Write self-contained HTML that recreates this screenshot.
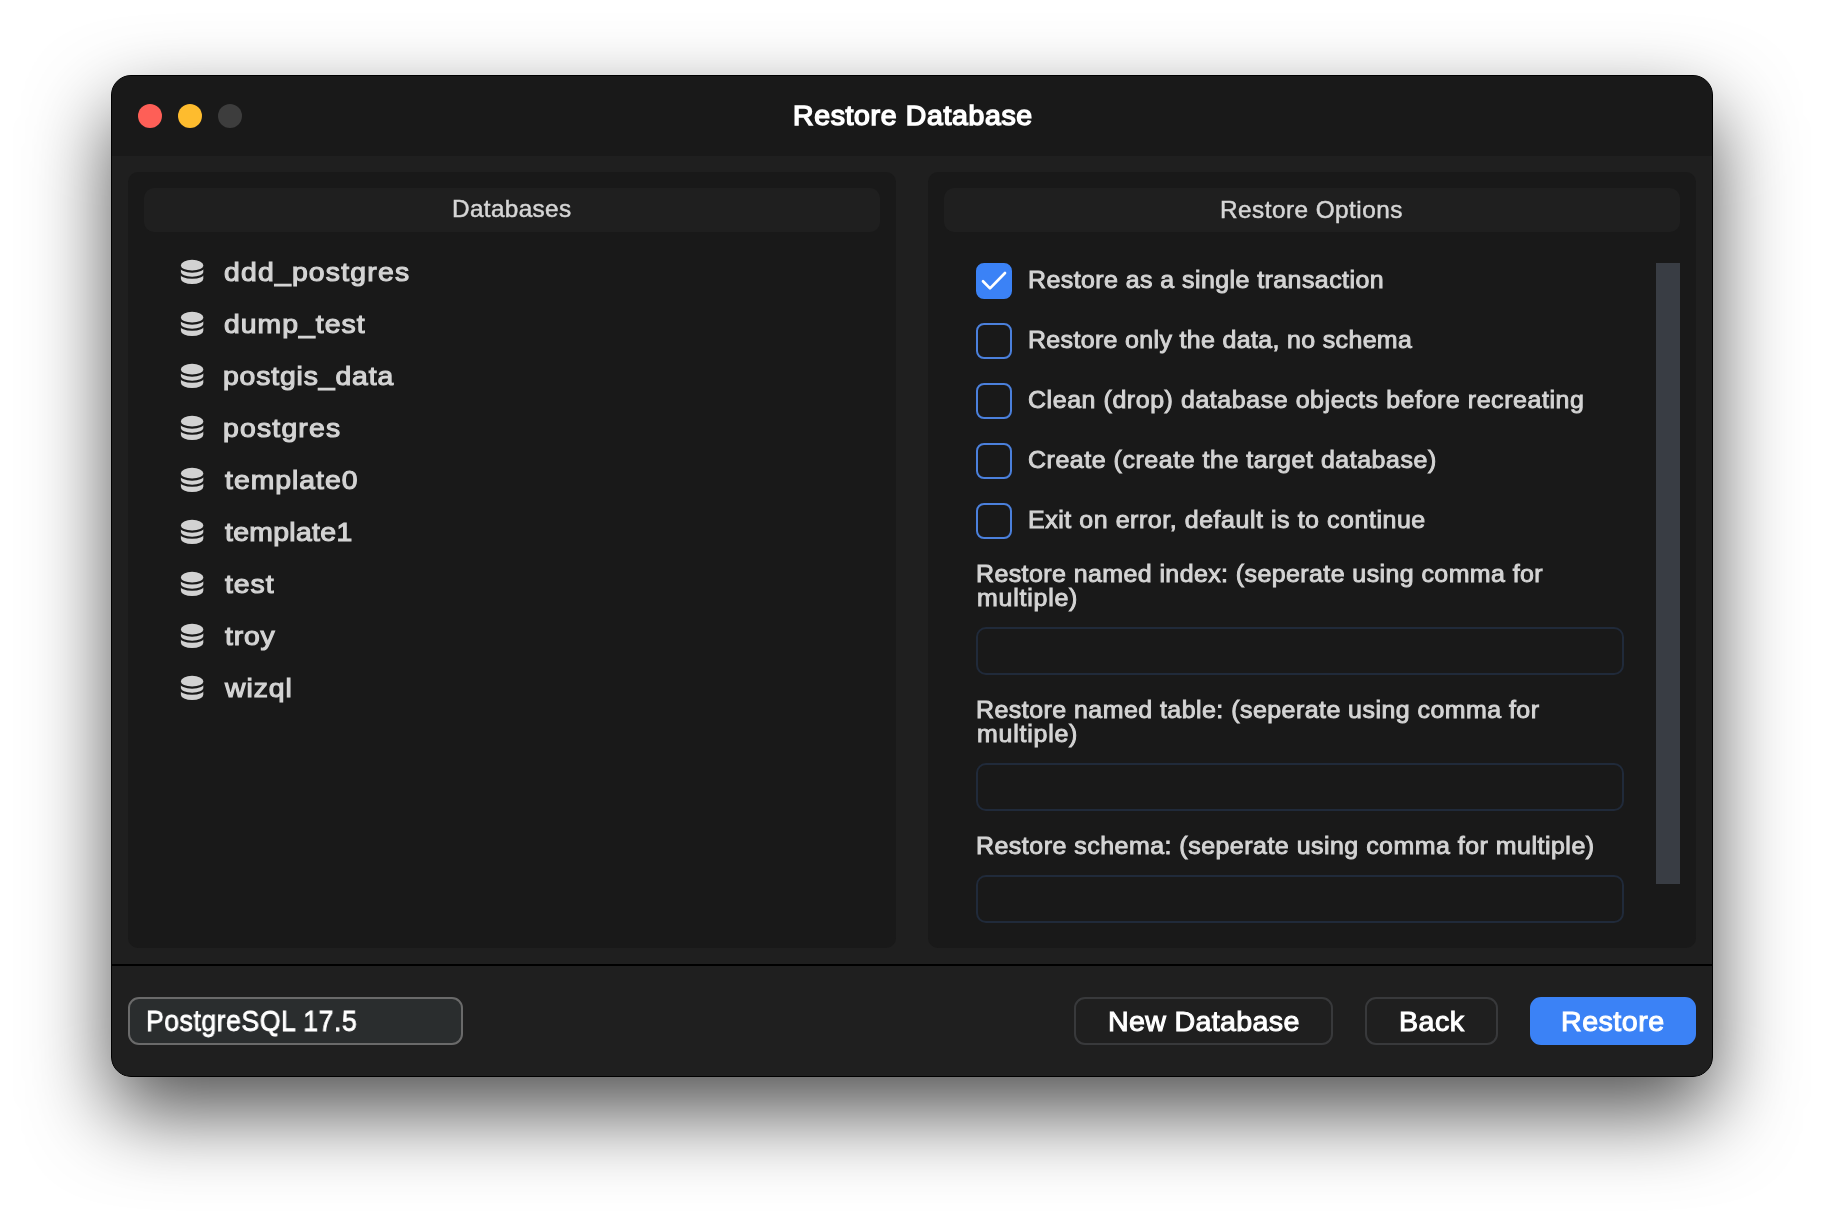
<!DOCTYPE html>
<html lang="en">
<head>
<meta charset="utf-8">
<title>Restore Database</title>
<style>
*{box-sizing:border-box;margin:0;padding:0}
html,body{width:1824px;height:1224px;background:#fff;overflow:hidden}
body{position:relative;font-family:"Liberation Sans",sans-serif;color:#d4d4d4}
.shadow{position:absolute;left:111px;top:75px;width:1602px;height:1002px;border-radius:20px;
  box-shadow:0 36px 82px rgba(0,0,0,.68)}
.win{transform:translateZ(0);position:absolute;left:111px;top:75px;width:1602px;height:1002px;border-radius:20px;background:#1f1f1f;overflow:hidden;border:1px solid #000}
.win *{position:absolute}
.t{white-space:nowrap;line-height:1;will-change:transform;transform-origin:0 0}
.titlebar{left:0;top:0;width:1600px;height:80px;background:#191919}
.dot{width:24px;height:24px;border-radius:50%;top:28px}
.title{color:#fff;-webkit-text-stroke:1.45px #fff}
.panel{top:96px;width:768px;height:776px;background:#191919;border-radius:10px}
.phead{top:112px;width:736px;height:44px;background:#1f1f1f;border-radius:10px}
.ph{color:#d6d6d6;-webkit-text-stroke:.5px #d6d6d6}
.db{color:#d4d4d4;-webkit-text-stroke:1.1px #d4d4d4}
.ico{left:68px;width:24px;height:26px}
.cb{left:864px;width:36px;height:36px;border:2px solid #4b80dc;border-radius:8px}
.cb.on{background:#3b82f6;border-color:#3b82f6}
.cl,.lab{color:#d4d4d4;-webkit-text-stroke:.9px #d4d4d4}
.inp{left:864px;width:648px;height:48px;border:2px solid #202a3a;border-radius:10px;background:#191919}
.sb{left:1544px;top:187px;width:24px;height:621px;background:#393d44}
.divider{left:0;top:888px;width:1600px;height:2px;background:#000}
.pgbox{left:16px;top:921px;width:335px;height:48px;border:2px solid #6a6a6a;border-radius:11px;background:#2a2d2e}
.pg{color:#fff;-webkit-text-stroke:.8px #fff}
.btn{top:921px;height:48px;border:2px solid #38393b;border-radius:11px;background:#1f1f1f}
.btn.primary{background:#3b82f6;border-color:#3b82f6}
.bt{color:#fff;-webkit-text-stroke:1px #fff}
</style>
</head>
<body>
<div class="shadow"></div>
<div class="win">
  <div class="titlebar"></div>
  <div class="dot" style="left:26px;background:#fe5f57"></div>
  <div class="dot" style="left:66px;background:#febc2e"></div>
  <div class="dot" style="left:106px;background:#3d3d3d"></div>
  <span class="t title" id="title" style="left:680.52px;top:27.10px;font-size:26.8px;letter-spacing:0.640px;transform:scaleX(1.06)">Restore Database</span>

  <div class="panel" style="left:16px"></div>
  <div class="phead" style="left:32px"></div>
  <span class="t ph" id="h1" style="left:339.70px;top:122.46px;font-size:23.6px;letter-spacing:0.347px;transform:scaleX(1.03)">Databases</span>
  <svg class="ico" style="top:183px" viewBox="0 0 24 26"><path fill="#d2d2d2" d="M0.9 6.2a11.2 5.4 0 0 1 22.4 0v13.47a11.2 5.4 0 0 1-22.4 0z"/><path fill="none" stroke="#191919" stroke-width="2.05" d="M0.1 7.2a12 5.4 0 0 0 24 0M0.1 13.4a12 5.4 0 0 0 24 0"/></svg>
  <span class="t db" id="d0" style="left:111.91px;top:183.07px;font-size:26px;letter-spacing:1.112px;transform:scaleX(1.09)">ddd_postgres</span>
  <svg class="ico" style="top:235px" viewBox="0 0 24 26"><path fill="#d2d2d2" d="M0.9 6.2a11.2 5.4 0 0 1 22.4 0v13.47a11.2 5.4 0 0 1-22.4 0z"/><path fill="none" stroke="#191919" stroke-width="2.05" d="M0.1 7.2a12 5.4 0 0 0 24 0M0.1 13.4a12 5.4 0 0 0 24 0"/></svg>
  <span class="t db" id="d1" style="left:111.91px;top:235.07px;font-size:26px;letter-spacing:0.941px;transform:scaleX(1.09)">dump_test</span>
  <svg class="ico" style="top:287px" viewBox="0 0 24 26"><path fill="#d2d2d2" d="M0.9 6.2a11.2 5.4 0 0 1 22.4 0v13.47a11.2 5.4 0 0 1-22.4 0z"/><path fill="none" stroke="#191919" stroke-width="2.05" d="M0.1 7.2a12 5.4 0 0 0 24 0M0.1 13.4a12 5.4 0 0 0 24 0"/></svg>
  <span class="t db" id="d2" style="left:111.36px;top:287.07px;font-size:26px;letter-spacing:0.787px;transform:scaleX(1.09)">postgis_data</span>
  <svg class="ico" style="top:339px" viewBox="0 0 24 26"><path fill="#d2d2d2" d="M0.9 6.2a11.2 5.4 0 0 1 22.4 0v13.47a11.2 5.4 0 0 1-22.4 0z"/><path fill="none" stroke="#191919" stroke-width="2.05" d="M0.1 7.2a12 5.4 0 0 0 24 0M0.1 13.4a12 5.4 0 0 0 24 0"/></svg>
  <span class="t db" id="d3" style="left:111.36px;top:339.07px;font-size:26px;letter-spacing:1.103px;transform:scaleX(1.09)">postgres</span>
  <svg class="ico" style="top:391px" viewBox="0 0 24 26"><path fill="#d2d2d2" d="M0.9 6.2a11.2 5.4 0 0 1 22.4 0v13.47a11.2 5.4 0 0 1-22.4 0z"/><path fill="none" stroke="#191919" stroke-width="2.05" d="M0.1 7.2a12 5.4 0 0 0 24 0M0.1 13.4a12 5.4 0 0 0 24 0"/></svg>
  <span class="t db" id="d4" style="left:112.70px;top:391.07px;font-size:26px;letter-spacing:0.925px;transform:scaleX(1.09)">template0</span>
  <svg class="ico" style="top:443px" viewBox="0 0 24 26"><path fill="#d2d2d2" d="M0.9 6.2a11.2 5.4 0 0 1 22.4 0v13.47a11.2 5.4 0 0 1-22.4 0z"/><path fill="none" stroke="#191919" stroke-width="2.05" d="M0.1 7.2a12 5.4 0 0 0 24 0M0.1 13.4a12 5.4 0 0 0 24 0"/></svg>
  <span class="t db" id="d5" style="left:112.70px;top:443.07px;font-size:26px;letter-spacing:0.311px;transform:scaleX(1.09)">template1</span>
  <svg class="ico" style="top:495px" viewBox="0 0 24 26"><path fill="#d2d2d2" d="M0.9 6.2a11.2 5.4 0 0 1 22.4 0v13.47a11.2 5.4 0 0 1-22.4 0z"/><path fill="none" stroke="#191919" stroke-width="2.05" d="M0.1 7.2a12 5.4 0 0 0 24 0M0.1 13.4a12 5.4 0 0 0 24 0"/></svg>
  <span class="t db" id="d6" style="left:112.70px;top:495.07px;font-size:26px;letter-spacing:0.897px;transform:scaleX(1.09)">test</span>
  <svg class="ico" style="top:547px" viewBox="0 0 24 26"><path fill="#d2d2d2" d="M0.9 6.2a11.2 5.4 0 0 1 22.4 0v13.47a11.2 5.4 0 0 1-22.4 0z"/><path fill="none" stroke="#191919" stroke-width="2.05" d="M0.1 7.2a12 5.4 0 0 0 24 0M0.1 13.4a12 5.4 0 0 0 24 0"/></svg>
  <span class="t db" id="d7" style="left:112.70px;top:547.07px;font-size:26px;letter-spacing:0.763px;transform:scaleX(1.09)">troy</span>
  <svg class="ico" style="top:599px" viewBox="0 0 24 26"><path fill="#d2d2d2" d="M0.9 6.2a11.2 5.4 0 0 1 22.4 0v13.47a11.2 5.4 0 0 1-22.4 0z"/><path fill="none" stroke="#191919" stroke-width="2.05" d="M0.1 7.2a12 5.4 0 0 0 24 0M0.1 13.4a12 5.4 0 0 0 24 0"/></svg>
  <span class="t db" id="d8" style="left:113.34px;top:599.07px;font-size:26px;letter-spacing:0.873px;transform:scaleX(1.09)">wizql</span>

  <div class="panel" style="left:816px"></div>
  <div class="phead" style="left:832px"></div>
  <span class="t ph" id="h2" style="left:1108.40px;top:122.55px;font-size:23.6px;letter-spacing:0.469px;transform:scaleX(1.03)">Restore Options</span>
  <div class="sb"></div>
  <div class="cb on" style="top:187px"><svg viewBox="0 0 36 36" width="36" height="36" style="left:-2px;top:-2px"><path d="M7 18.2 L14 25.4 L29 10" fill="none" stroke="#fff" stroke-width="2.7" stroke-linecap="round" stroke-linejoin="round"/></svg></div>
  <span class="t cl" id="c1" style="left:915.76px;top:193.16px;font-size:23.3px;letter-spacing:0.415px;transform:scaleX(1.07)">Restore as a single transaction</span>
  <div class="cb" style="top:247px"></div>
  <span class="t cl" id="c2" style="left:915.76px;top:253.16px;font-size:23.3px;letter-spacing:0.335px;transform:scaleX(1.07)">Restore only the data, no schema</span>
  <div class="cb" style="top:307px"></div>
  <span class="t cl" id="c3" style="left:916.21px;top:313.16px;font-size:23.3px;letter-spacing:0.538px;transform:scaleX(1.07)">Clean (drop) database objects before recreating</span>
  <div class="cb" style="top:367px"></div>
  <span class="t cl" id="c4" style="left:916.21px;top:373.16px;font-size:23.3px;letter-spacing:0.517px;transform:scaleX(1.07)">Create (create the target database)</span>
  <div class="cb" style="top:427px"></div>
  <span class="t cl" id="c5" style="left:915.76px;top:433.16px;font-size:23.3px;letter-spacing:0.528px;transform:scaleX(1.07)">Exit on error, default is to continue</span>
  <span class="t lab" id="l1a" style="left:864.48px;top:487.05px;font-size:23.3px;letter-spacing:0.402px;transform:scaleX(1.07)">Restore named index: (seperate using comma for</span>
  <span class="t lab" id="l1b" style="left:864.65px;top:511.05px;font-size:23.3px;letter-spacing:0.725px;transform:scaleX(1.07)">multiple)</span>
  <div class="inp" style="top:551px"></div>
  <span class="t lab" id="l2a" style="left:863.59px;top:623.06px;font-size:23.3px;letter-spacing:0.441px;transform:scaleX(1.07)">Restore named table: (seperate using comma for</span>
  <span class="t lab" id="l2b" style="left:864.65px;top:647.06px;font-size:23.3px;letter-spacing:0.725px;transform:scaleX(1.07)">multiple)</span>
  <div class="inp" style="top:687px"></div>
  <span class="t lab" id="l3" style="left:864.48px;top:759.16px;font-size:23.3px;letter-spacing:0.469px;transform:scaleX(1.07)">Restore schema: (seperate using comma for multiple)</span>
  <div class="inp" style="top:799px"></div>

  <div class="divider"></div>
  <div class="pgbox"></div>
  <span class="t pg" id="pg" style="left:33.80px;top:929.80px;font-size:29.6px;letter-spacing:0.583px;transform:scaleX(0.9)">PostgreSQL 17.5</span>
  <div class="btn" style="left:962px;width:259px"></div>
  <span class="t bt" id="b1" style="left:996.40px;top:931.60px;font-size:27.8px;letter-spacing:0.315px;transform:scaleX(1.03)">New Database</span>
  <div class="btn" style="left:1253px;width:133px"></div>
  <span class="t bt" id="b2" style="left:1286.80px;top:931.60px;font-size:27.8px;letter-spacing:0.433px;transform:scaleX(1.03)">Back</span>
  <div class="btn primary" style="left:1418px;width:166px"></div>
  <span class="t bt" id="b3" style="left:1449.36px;top:931.60px;font-size:27.8px;letter-spacing:0.466px;transform:scaleX(1.03)">Restore</span>
</div>
</body>
</html>
